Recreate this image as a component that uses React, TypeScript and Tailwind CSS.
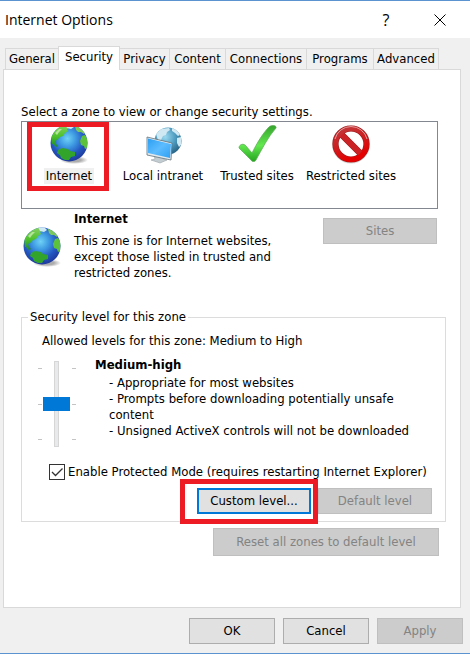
import { useState } from 'react';
import type { ReactNode } from 'react';

interface Zone {
  id: string;
  name: string;
  icon: ReactNode;
}

const TABS = [
  { name: 'General', width: 'w-[54px]' },
  { name: 'Security', width: 'w-[62px]' },
  { name: 'Privacy', width: 'w-[50px]' },
  { name: 'Content', width: 'w-[56px]' },
  { name: 'Connections', width: 'w-[81px]' },
  { name: 'Programs', width: 'w-[67px]' },
  { name: 'Advanced', width: 'w-[65px]' },
];

function GlobeIcon({ id }: { id: string }) {
  return (
    <svg className="size-10 shrink-0" viewBox="0 0 40 40" aria-hidden="true">
      <defs>
        <radialGradient id={`${id}-sea`} cx="0.46" cy="0.38" r="0.62">
          <stop offset="0" stopColor="#6fd2f6" />
          <stop offset="0.35" stopColor="#3f9be2" />
          <stop offset="0.7" stopColor="#2459c2" />
          <stop offset="1" stopColor="#1e3a9c" />
        </radialGradient>
        <linearGradient id={`${id}-land`} x1="0" y1="0" x2="0" y2="1">
          <stop offset="0" stopColor="#86cf62" />
          <stop offset="0.5" stopColor="#4fc22c" />
          <stop offset="1" stopColor="#1d8a2c" />
        </linearGradient>
        <radialGradient id={`${id}-shadow`}>
          <stop offset="0.5" stopColor="#8a8a8a" stopOpacity="0.7" />
          <stop offset="1" stopColor="#8a8a8a" stopOpacity="0" />
        </radialGradient>
        <clipPath id={`${id}-clip`}>
          <circle cx="20" cy="19" r="18.5" />
        </clipPath>
      </defs>
      <ellipse cx="25" cy="36" rx="14" ry="4" fill={`url(#${id}-shadow)`} />
      <circle cx="20" cy="19" r="18.5" fill={`url(#${id}-sea)`} />
      <g clipPath={`url(#${id}-clip)`}>
        <path
          d="M2 12 8 4l6-3h5l1 3-2 1 1 2-3 2-2 3-3 1-3 3-2 1 1 3 2 2-2 1-3-3-1 0z"
          fill={`url(#${id}-land)`}
        />
        <path d="M26 2l5 1 5 6-1 1-3-2-3 0-2-2z" fill="#79c95c" />
        <path d="M33 12l3-1 3 5-1 8-2 1-1-3-3-1-1-4z" fill="#5cc23c" />
        <path
          d="M9 26l4-2 6 1 2 2 5 1 0 4-4 1-2 3-4 0-4-2-1-3-3-2z"
          fill="#32a42c"
        />
        <path d="M16 0l6 0 3 3-3 2-4-1z" fill="#cfe9f2" />
        <path d="M6 9l4-4 3 0-3 3-2 3z" fill="#b5e59a" />
      </g>
    </svg>
  );
}

function IntranetIcon() {
  return (
    <svg className="size-10 shrink-0" viewBox="0 0 40 40" aria-hidden="true">
      <defs>
        <radialGradient id="net-sea" cx="0.4" cy="0.35" r="0.7">
          <stop offset="0" stopColor="#9ad9ef" />
          <stop offset="0.55" stopColor="#4c9abf" />
          <stop offset="1" stopColor="#245f80" />
        </radialGradient>
        <linearGradient id="net-screen" x1="0" y1="0" x2="1" y2="1">
          <stop offset="0" stopColor="#2d9ff2" />
          <stop offset="0.5" stopColor="#5cbcff" />
          <stop offset="1" stopColor="#2f9ff3" />
        </linearGradient>
        <clipPath id="net-clip">
          <circle cx="25" cy="17" r="13.5" />
        </clipPath>
      </defs>
      <circle cx="25" cy="17" r="13.5" fill="url(#net-sea)" />
      <g clipPath="url(#net-clip)" fill="#cfe8f2">
        <path d="M13 10l5-5 8-1 1 2-3 2-1 3-3 1-2 4-3 0z" />
        <path d="M29 3l6 4 2 4-2 1-3-3-3-2z" />
        <path d="M34 14l4-1 1 7-3 3-2-4z" />
      </g>
      <path d="M11 31l8-1 1 5 4 1-7 3-9-3 4-1z" fill="#c3ccd1" stroke="#98a3a9" strokeWidth="0.6" />
      <path d="M4 13l25 6-1 17L4 31z" fill="#e3eaed" stroke="#60727c" strokeWidth="0.8" />
      <path d="M5 14.500l23 5.500-1 14-22-5z" fill="url(#net-screen)" />
    </svg>
  );
}

function TrustedIcon() {
  return (
    <svg className="size-10 shrink-0" viewBox="0 0 40 40" aria-hidden="true">
      <defs>
        <linearGradient id="trusted-fill" x1="0" y1="0" x2="0" y2="1">
          <stop offset="0" stopColor="#35a52d" />
          <stop offset="0.55" stopColor="#62e84f" />
          <stop offset="1" stopColor="#25a51f" />
        </linearGradient>
      </defs>
      <path
        d="M2 24c0-4 5-5 7-2l6 7C20 19 26 9 32 3c2-2 8-2 7 1C31 13 25 25 19 36c-1 2-4 2-5 0z"
        fill="url(#trusted-fill)"
        stroke="#5aa653"
        strokeWidth="0.7"
      />
    </svg>
  );
}

function RestrictedIcon() {
  return (
    <svg className="size-10 shrink-0" viewBox="0 0 40 40" aria-hidden="true">
      <defs>
        <linearGradient id="restricted-fill" x1="0" y1="0" x2="0.4" y2="1">
          <stop offset="0" stopColor="#c23a3c" />
          <stop offset="0.5" stopColor="#cb2023" />
          <stop offset="1" stopColor="#e40000" />
        </linearGradient>
      </defs>
      <g fill="none">
        <circle cx="20" cy="20.500" r="16" stroke="#b9b9b9" strokeWidth="6" opacity="0.5" />
        <path d="M9 9l21 21" stroke="#a01818" strokeWidth="6.600" />
        <circle cx="20" cy="20" r="15.500" stroke="#a31a1c" strokeWidth="6.200" />
        <path d="M9 9l22 22" stroke="#cb2226" strokeWidth="5.400" />
        <circle cx="20" cy="20" r="15.500" stroke="url(#restricted-fill)" strokeWidth="5" />
        <path d="M4 15a16.500 16.500 0 0 1 32 0" stroke="#e39a9a" strokeWidth="1" />
      </g>
    </svg>
  );
}

const ZONES: Zone[] = [
  { id: 'internet', name: 'Internet', icon: <GlobeIcon id="zone" /> },
  { id: 'intranet', name: 'Local intranet', icon: <IntranetIcon /> },
  { id: 'trusted', name: 'Trusted sites', icon: <TrustedIcon /> },
  { id: 'restricted', name: 'Restricted sites', icon: <RestrictedIcon /> },
];

const BUTTON =
  'border border-[#adadad] bg-[#e1e1e1] text-center disabled:border-[#bfbfbf] disabled:bg-[#cccccc] disabled:text-[#838383]';

function Ticks() {
  return (
    <div className="flex h-[72px] flex-col justify-between" aria-hidden="true">
      <span className="h-px w-1 bg-[#c4c4c4]" />
      <span className="h-px w-1 bg-[#c4c4c4]" />
      <span className="h-px w-1 bg-[#c4c4c4]" />
    </div>
  );
}

export default function App() {
  const [tab, setTab] = useState('Security');
  const [zone, setZone] = useState('internet');
  const [level, setLevel] = useState(2);
  const [protectedMode, setProtectedMode] = useState(true);

  return (
    <main className="flex min-h-screen flex-col border-y border-[#5b93d0] bg-[#f0f0f0] font-['DejaVu_Sans_Condensed','DejaVu_Sans',sans-serif] text-[13px] leading-4 text-black">
      {/* Title bar */}
      <header className="flex h-[37px] items-center bg-white pr-5 pl-[5px]">
        <h1 className="flex-1 font-['Open_Sans',sans-serif] text-sm">Internet Options</h1>
        <button type="button" aria-label="Help" className="mr-8 w-6 font-['Open_Sans',sans-serif] text-base">
          ?
        </button>
        <button type="button" aria-label="Close" className="flex w-5 justify-center">
          <svg className="size-3" viewBox="0 0 12 12" stroke="#000" aria-hidden="true">
            <path d="M0.500 0.500l11 11M11.500 0.500l-11 11" />
          </svg>
        </button>
      </header>

      {/* Tabs */}
      <div role="tablist" className="flex h-[31px] items-end pl-[5px]">
        {TABS.map((t) => (
          <button
            key={t.name}
            type="button"
            role="tab"
            aria-selected={tab === t.name}
            onClick={() => setTab(t.name)}
            className={`${t.width} shrink-0 border-t border-r border-[#d9d9d9] whitespace-nowrap ${
              tab === t.name
                ? 'relative -mb-px -ml-px h-6 border-l bg-white pb-1'
                : 'h-[21px] first:border-l'
            }`}
          >
            {t.name}
          </button>
        ))}
      </div>

      <section className="mr-[9px] ml-[3px] flex-1 border border-[#d9d9d9] bg-white pt-[34px] pr-3.5 pl-[17px]">
        {/* Zone list */}
        <p>Select a zone to view or change security settings.</p>
        <div className="mt-px mr-2 flex h-[88px] border border-[#828790]">
          {ZONES.map((z) => (
            <button
              key={z.id}
              type="button"
              aria-pressed={zone === z.id}
              onClick={() => setZone(z.id)}
              className="relative flex w-[94px] flex-col items-center gap-1 pt-0.5 whitespace-nowrap"
            >
              {z.icon}
              <span className={zone === z.id ? 'bg-[#f0f0f0] px-0.5' : 'px-0.5'}>{z.name}</span>
              {z.id === 'internet' && (
                <span className="absolute top-0 left-[5px] h-[69px] w-[82px] border-[5px] border-[#ed1c24]" />
              )}
            </button>
          ))}
        </div>

        {/* Selected zone */}
        <div className="mt-0.5 mr-[9px] flex items-start">
          <div className="pt-4 pl-px">
            <GlobeIcon id="info" />
          </div>
          <div className="flex-1 pl-3">
            <h2 className="font-bold">Internet</h2>
            <p className="mt-1.5">
              This zone is for Internet websites,
              <br />
              except those listed in trusted and
              <br />
              restricted zones.
            </p>
          </div>
          <button type="button" disabled className={`${BUTTON} mt-[7px] h-[26px] w-[114px]`}>
            Sites
          </button>
        </div>

        {/* Security level */}
        <fieldset className="mt-7 border border-[#dcdcdc] pr-[13px] pb-[7px] pl-5">
          <legend className="-ml-3.5 px-0.5">Security level for this zone</legend>
          <p className="mt-2">Allowed levels for this zone: Medium to High</p>
          <div className="mt-2 flex">
            <div className="mt-1 -ml-1 flex items-center">
              <Ticks />
              <input
                type="range"
                min={1}
                max={3}
                value={level}
                onChange={(e) => setLevel(Number(e.target.value))}
                aria-label="Security level"
                className="mr-0.5 ml-px h-[86px] w-[27px] appearance-none bg-transparent [direction:rtl] [writing-mode:vertical-lr] [&::-webkit-slider-runnable-track]:h-full [&::-webkit-slider-runnable-track]:w-[5px] [&::-webkit-slider-runnable-track]:border [&::-webkit-slider-runnable-track]:border-[#d6d6d6] [&::-webkit-slider-runnable-track]:bg-[#e7eaea] [&::-webkit-slider-thumb]:-ml-3 [&::-webkit-slider-thumb]:h-3.5 [&::-webkit-slider-thumb]:w-[27px] [&::-webkit-slider-thumb]:appearance-none [&::-webkit-slider-thumb]:bg-[#0078d7]"
              />
              <Ticks />
            </div>
            <div className="pl-[19px]">
              <h3 className="font-bold">Medium-high</h3>
              <ul className="mt-0.5 pl-3.5">
                <li>- Appropriate for most websites</li>
                <li>
                  - Prompts before downloading potentially unsafe
                  <br />
                  content
                </li>
                <li>- Unsigned ActiveX controls will not be downloaded</li>
              </ul>
            </div>
          </div>
          <div className="mt-[17px] flex items-center gap-[3px] pl-[7px]">
            <span className="relative flex size-4 shrink-0">
              <input
                id="protected-mode"
                type="checkbox"
                checked={protectedMode}
                onChange={(e) => setProtectedMode(e.target.checked)}
                className="size-4 appearance-none border border-[#333] bg-white"
              />
              {protectedMode && (
                <svg
                  className="pointer-events-none absolute inset-0 size-4"
                  viewBox="0 0 16 16"
                  fill="none"
                  stroke="#333"
                  strokeWidth="1.300"
                  aria-hidden="true"
                >
                  <path d="M3 8l3.500 3.500L13.500 4.500" />
                </svg>
              )}
            </span>
            <label htmlFor="protected-mode" className="whitespace-nowrap">
              Enable Protected Mode (requires restarting Internet Explorer)
            </label>
          </div>
          <div className="mt-2 flex justify-end gap-[7px]">
            <div className="relative z-10">
              <button type="button" className="h-[26px] w-[114px] border-2 border-[#0078d7] bg-[#e1e1e1]">
                Custom level...
              </button>
              <span className="pointer-events-none absolute -top-[9px] -right-[7px] -bottom-2.5 -left-[17px] border-[5px] border-[#ed1c24]" />
            </div>
            <button type="button" disabled className={`${BUTTON} h-[26px] w-[114px]`}>
              Default level
            </button>
          </div>
        </fieldset>

        <div className="mt-1.5 mr-[7px] mb-6 flex justify-end">
          <button type="button" disabled className={`${BUTTON} h-7 w-[226px]`}>
            Reset all zones to default level
          </button>
        </div>
      </section>

      {/* Dialog buttons */}
      <footer className="flex justify-end gap-2 pt-2.5 pr-[7px] pb-[9px]">
        <button type="button" className={`${BUTTON} h-[26px] w-[86px]`}>
          OK
        </button>
        <button type="button" className={`${BUTTON} h-[26px] w-[86px]`}>
          Cancel
        </button>
        <button type="button" disabled className={`${BUTTON} h-[26px] w-[86px]`}>
          Apply
        </button>
      </footer>
    </main>
  );
}
